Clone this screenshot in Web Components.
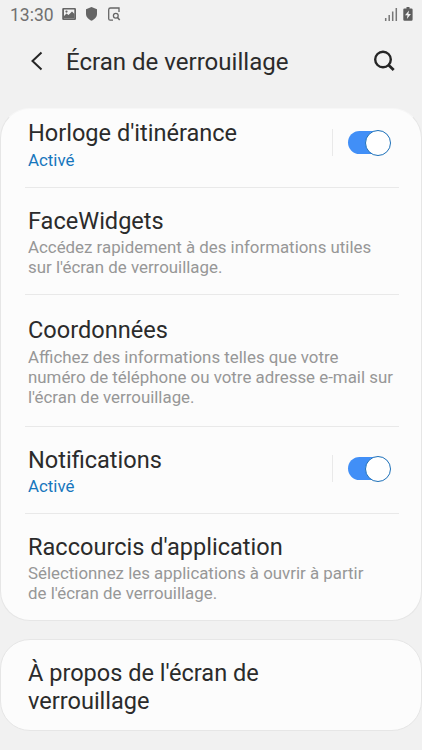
<!DOCTYPE html>
<html lang="fr"><head><meta charset="utf-8"><title>Écran de verrouillage</title>
<style>
html,body{margin:0;height:750px;overflow:hidden;background:#f1f1f1;font-family:Roboto,"Noto Sans",sans-serif;color:#2b2b2b}
</style></head><body>
<lock-settings></lock-settings>
<script>
const define=(name,html)=>customElements.define(name,class extends HTMLElement{
  constructor(){super();this.attachShadow({mode:'open'}).innerHTML=html;}
});
define('status-bar',`<style>
:host{display:flex;height:30px;align-items:center;padding:0 9px 0 10px;box-sizing:border-box;color:#707070;font-size:17.5px}
span{width:52px;line-height:28px;white-space:nowrap}
i{flex:1}svg{display:block;flex:none}
</style><span>13:30</span>
<svg width="60" height="30" viewBox="62 0 60 30" fill="none" stroke="#656565">
<path fill="#656565" stroke="none" fill-rule="evenodd" d="M63.400 8h11.400q1.200 0 1.200 1.200v9.600q0 1.200-1.200 1.200H63.400q-1.200 0-1.200-1.200V9.200q0-1.200 1.200-1.200zM64 9.500v9h10.300v-9z"/>
<path fill="#656565" stroke="none" d="M63.500 18v-1.500l3-3 2 1.500 3.500-3.500 2.500 2.500v4.500h-11z"/><circle cx="66.500" cy="11.600" r="1.100" fill="#656565" stroke="none"/>
<path fill="#656565" stroke="none" d="M91.500 7l5.500 2.300v4.700c0 3-2.500 5.500-5.500 6.700-3-1.200-5.500-3.700-5.500-6.700V9.300z"/>
<path stroke-width="1.300" d="M119 12V8h-8.500q-1.800 0-1.800 1.800v8.900q0 1.500 1.500 1.500h2.800"/><circle cx="115.800" cy="15.700" r="2.400" stroke-width="1.300"/><path stroke-width="1.500" d="M117.500 17.500l2.200 2.500"/>
</svg><i></i>
<svg width="30" height="30" viewBox="383 0 30 30"><path stroke="#777" stroke-width="1.500" d="M385.700 18v3M389.200 15v6M392.700 11.500v9.500M396.300 8v13"/>
<path fill="#5e5e5e" d="M406.500 7h3v1.400h1.900q1.200 0 1.200 1.200v9.900q0 1.200-1.200 1.200h-6.900q-1.200 0-1.200-1.200V9.600q0-1.200 1.200-1.200h2z"/><path fill="#f1f1f1" d="M409 10.500l-4 4.800h2.500l-.6 3.600 4-5h-2.500z"/></svg>`);
define('app-header',`<style>
:host{display:flex;height:78px;padding:14px 26px 0 27px;box-sizing:border-box;align-items:flex-start}
svg{display:block;flex:none}h1{margin:2px 0 0;flex:1;font-weight:400;font-size:24.050px;line-height:32px;padding-left:19px;white-space:nowrap}
</style><svg width="20" height="34" viewBox="27 44 20 34" fill="none" stroke="#252525" stroke-width="2"><path d="M41.500 52.500L32.500 61l9 8.500"/></svg>
<h1><slot></slot></h1>
<svg width="24" height="34" viewBox="372 44 24 34" fill="none" stroke="#252525" stroke-width="2.400"><circle cx="383" cy="59.500" r="7.800"/><path stroke-width="2.800" d="M388.500 65l5.200 5"/></svg>`);
define('settings-card',`<style>
:host{display:block;margin:0;box-sizing:border-box;background:#fcfcfc;border:1px solid #e6e6e6;border-radius:30px;overflow:hidden}
:host([joined]){border-top-color:#f7f7f7}
</style><slot></slot>`);
define('toggle-switch',`<style>
:host{display:flex;width:58px;height:27px;align-items:center;justify-content:flex-end;border-left:1px solid #e9e9e9;box-sizing:border-box}
div{width:42px;height:23px;border-radius:12px;background:#418ff7;display:flex;align-items:center;justify-content:flex-end}
b{box-sizing:border-box;flex:none;width:26px;height:26px;border:1.400px solid #1d70b8;border-radius:50%;background:#fff;margin-right:-1px}
</style><div><b></b></div>`);
define('setting-row',`<style>
:host{display:flex;box-sizing:border-box;height:var(--h);padding:var(--t) 27px 0;position:relative;justify-content:space-between}
:host(:not([last]))::after{content:"";position:absolute;left:24px;right:22px;bottom:0;height:1px;background:#e9e9e9}
h2{margin:0 0 var(--g,2px);font-weight:400;font-size:23.550px;line-height:28px;white-space:nowrap}
p{margin:0;font-size:16.870px;line-height:20px;color:#979797;white-space:nowrap}
:host([active]) p{color:#1776bd}
::slotted(toggle-switch){margin:var(--s,10px) 4px 0 0}
</style><div><h2><slot name="title"></slot></h2><p><slot></slot></p></div><slot name="control"></slot>`);
define('lock-settings',`<style>
:host{display:flex;flex-direction:column;width:422px;height:750px}
settings-card+settings-card{margin-top:18px}
</style><status-bar></status-bar><app-header>Écran de verrouillage</app-header>
<settings-card joined>
<setting-row active style="--h:79px;--t:10px;--g:3px"><span slot="title">Horloge d'itinérance</span>Activé<toggle-switch slot="control"></toggle-switch></setting-row>
<setting-row style="--h:107px;--t:19px"><span slot="title">FaceWidgets</span>Accédez rapidement à des informations utiles<br>sur l'écran de verrouillage.</setting-row>
<setting-row style="--h:132px;--t:21px;--g:3px"><span slot="title">Coordonnées</span>Affichez des informations telles que votre<br>numéro de téléphone ou votre adresse e-mail sur<br>l'écran de verrouillage.</setting-row>
<setting-row active style="--h:87px;--t:19px;--s:9px"><span slot="title">Notifications</span>Activé<toggle-switch slot="control"></toggle-switch></setting-row>
<setting-row last style="--h:106px;--t:19px"><span slot="title">Raccourcis d'application</span>Sélectionnez les applications à ouvrir à partir<br>de l'écran de verrouillage.</setting-row>
</settings-card>
<settings-card><setting-row last style="--h:90px;--t:19px"><span slot="title">À propos de l'écran de<br>verrouillage</span></setting-row></settings-card>`);
</script></body></html>
